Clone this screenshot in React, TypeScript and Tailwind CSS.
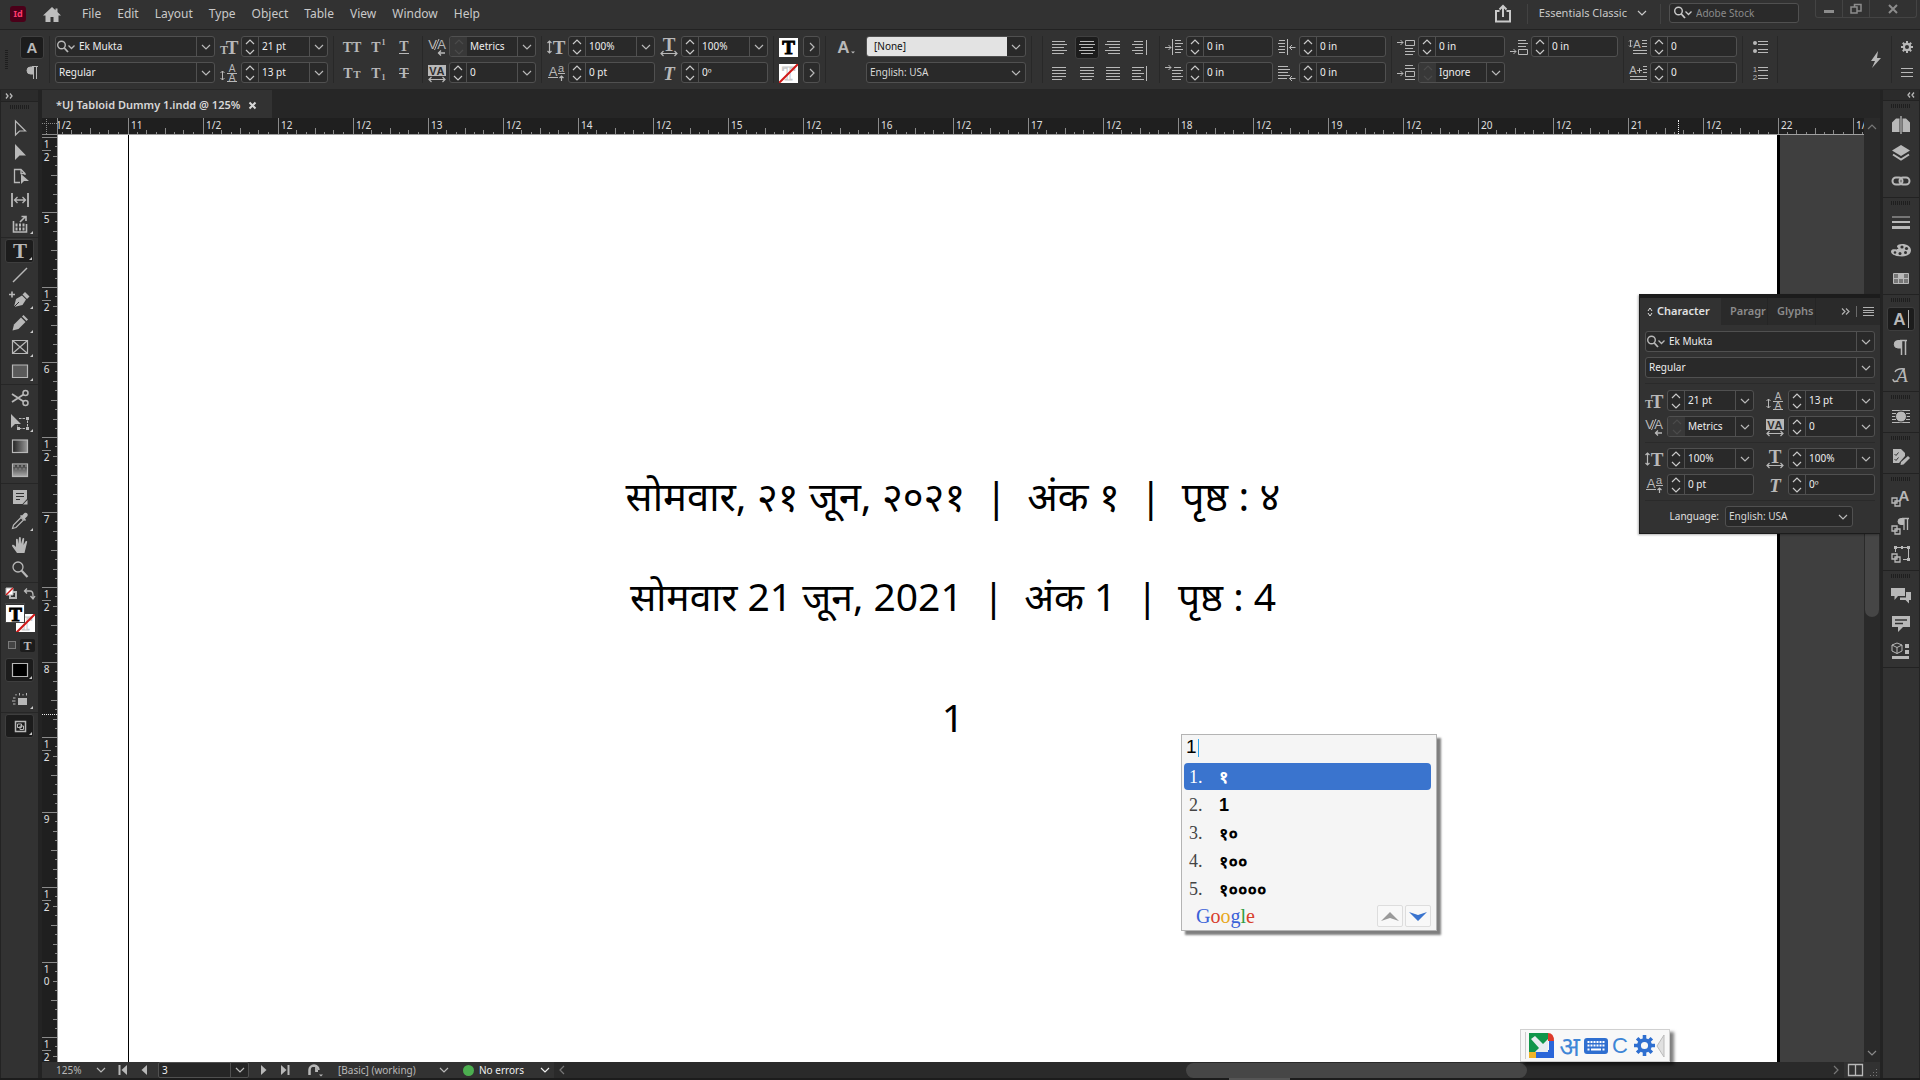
import React from "react";

type Kids = { children?: React.ReactNode };
const SERIF = "Liberation Serif";
const SANS = "Liberation Sans";

/* ---------- small shared pieces ---------- */

function Ico({ w = 18, h = 18, children }: Kids & { w?: number; h?: number }) {
  return (
    <svg width={w} height={h} viewBox={`0 0 ${w} ${h}`} fill="none" stroke="currentColor" strokeWidth="1" className="shrink-0 overflow-visible" aria-hidden="true">
      {children}
    </svg>
  );
}

function Txt({ x, y, s, children, bold, serif, italic, fill = "currentColor" }: Kids & { x: number; y: number; s: number; bold?: boolean; serif?: boolean; italic?: boolean; fill?: string }) {
  return (
    <text x={x} y={y} fontSize={s} fontFamily={serif ? SERIF : SANS} fontWeight={bold ? 700 : 400} fontStyle={italic ? "italic" : "normal"} fill={fill} stroke="none" textAnchor="middle">
      {children}
    </text>
  );
}

function Chevron({ dir = "down" }: { dir?: "down" | "up" | "right" | "left" }) {
  const d = { down: "M1 3l4 4 4-4", up: "M1 7l4-4 4 4", right: "M3 1l4 4-4 4", left: "M7 1L3 5l4 4" }[dir];
  return (
    <svg width="10" height="10" viewBox="0 0 10 10" fill="none" stroke="currentColor" strokeWidth="1.2" className="shrink-0" aria-hidden="true">
      <path d={d} />
    </svg>
  );
}

function SearchMark() {
  return (
    <Ico w={20} h={14}>
      <circle cx="5.5" cy="5" r="3.8" strokeWidth="1.4" />
      <path d="M8.3 8l3.7 4" strokeWidth="1.8" />
      <path d="M12.5 5.5l3 3 3-3" strokeWidth="1.3" />
    </Ico>
  );
}

function Spinner({ label, disabled }: { label: string; disabled?: boolean }) {
  return (
    <div className={disabled ? "flex w-[17px] shrink-0 flex-col bg-[#383838] text-[#4a4a4a]" : "flex w-[17px] shrink-0 flex-col border-r border-[#4f4f4f] text-[#c8c8c8]"}>
      <button aria-label={`${label} up`} className="flex h-[10px] items-center justify-center"><Chevron dir="up" /></button>
      <button aria-label={`${label} down`} className="flex h-[9px] items-center justify-center"><Chevron /></button>
    </div>
  );
}

function Field({ label, value, drop, dead }: { label: string; value: string; drop?: boolean; dead?: boolean }) {
  return (
    <div className="flex h-[21px] w-[87px] shrink-0 overflow-hidden rounded-[3px] border border-[#505050] bg-[#292929]">
      <Spinner label={label} disabled={dead} />
      <input aria-label={label} defaultValue={value} className="w-0 min-w-0 flex-1 bg-transparent pl-[3px] text-[10px] text-[#eeeeee] outline-none" />
      {drop && (
        <button aria-label={`${label} options`} className="flex w-[18px] shrink-0 items-center justify-center border-l border-[#505050] text-[#b8b8b8]"><Chevron /></button>
      )}
    </div>
  );
}

function Combo({ label, value, search }: { label: string; value: string; search?: boolean }) {
  return (
    <div className="flex h-[21px] w-full overflow-hidden rounded-[3px] border border-[#505050] bg-[#292929] text-[#b8b8b8]">
      {search && <span className="flex items-center"><SearchMark /></span>}
      <input aria-label={label} defaultValue={value} className="w-0 min-w-0 flex-1 bg-transparent pl-[3px] text-[10px] text-[#eeeeee] outline-none" />
      <button aria-label={`${label} options`} className="flex w-[18px] shrink-0 items-center justify-center border-l border-[#505050]"><Chevron /></button>
    </div>
  );
}

function Drop({ label, value, light }: { label: string; value: string; light?: boolean }) {
  return (
    <div className="relative h-[21px] w-full overflow-hidden rounded-[3px] border border-[#505050] bg-[#292929] text-[#b8b8b8]">
      <select aria-label={label} className={light ? "mr-[18px] block h-full w-[calc(100%-18px)] appearance-none bg-[#e3e3e3] pl-[7px] text-[10px] text-[#111111] outline-none" : "block h-full w-full appearance-none bg-transparent pl-[3px] text-[10px] text-[#d8d8d8] outline-none"}>
        <option>{value}</option>
      </select>
      <span className="pointer-events-none absolute top-[5px] right-[4px]"><Chevron /></span>
    </div>
  );
}

function Divider() {
  return <div className="mx-[5px] h-[47px] w-px shrink-0 bg-[#282828]" />;
}

/* ---------- typographic icons ---------- */

const ISize = () => <Ico><Txt x={4} y={15.5} s={12} bold serif>T</Txt><Txt x={12} y={15.5} s={19} bold serif>T</Txt></Ico>;
const ILead = () => (
  <Ico>
    <Txt x={12} y={8} s={10}>A</Txt><Txt x={12} y={17} s={10}>A</Txt>
    <path d="M7 9.5h10M7 17.5h10M2.5 7v9M.5 9l2-2 2 2M.5 14l2 2 2-2" />
  </Ico>
);
const IKern = () => <Ico><Txt x={4.5} y={11} s={13}>V</Txt><Txt x={13.5} y={11} s={13}>A</Txt><path d="M6.5 12L11 1" /><path d="M10 15h7M13 12.5L10.5 15l2.5 2.5" strokeWidth="1.3" /></Ico>;
const ITrack = () => (
  <Ico>
    <rect x="0" y="1" width="18" height="11" fill="currentColor" stroke="none" />
    <Txt x={5} y={10.5} s={11} fill="#2d2d2d" bold>V</Txt><Txt x={12.5} y={10.5} s={11} fill="#2d2d2d" bold>A</Txt>
    <path d="M1 15.5h16M3.5 13L1 15.5 3.5 18M14.5 13l2.500 2.500-2.500 2.500" strokeWidth="1.2" />
  </Ico>
);
const IVScale = () => <Ico><Txt x={12} y={15.5} s={19} bold serif>T</Txt><path d="M2.5 3v12M.5 5l2-2 2 2M.5 13l2 2 2-2" strokeWidth="1.2" /></Ico>;
const IHScale = () => <Ico><Txt x={9} y={12.5} s={19} bold serif>T</Txt><path d="M1 15.5h16M3.5 13L1 15.5 3.5 18M14.5 13l2.5 2.5-2.5 2.5" strokeWidth="1.2" /></Ico>;
const IBase = () => <Ico><Txt x={6} y={12} s={13}>A</Txt><Txt x={14} y={8} s={11}>a</Txt><path d="M1 13.5h10M11 9.5h7M14.500 17v-5M12.500 14l2-2 2 2" strokeWidth="1.2" /></Ico>;
const ISkew = () => <Ico><Txt x={9} y={15.5} s={19} bold serif italic>T</Txt></Ico>;

type Row = [number, number, number];
function Lines({ rows }: { rows: Row[] }) {
  return <>{rows.map(([y, a, b]) => <path key={y} d={`M${a} ${y}.5H${b}`} strokeWidth="1" />)}</>;
}

const alignTop: [string, Row[], boolean][] = [
  ["Align left", [[2, 1, 14], [5, 1, 16], [8, 1, 13], [11, 1, 16], [14, 1, 13]], false],
  ["Align center", [[2, 2, 16], [5, 1, 17], [8, 3, 15], [11, 1, 17], [14, 3, 15]], false],
  ["Align right", [[2, 3, 16], [5, 1, 16], [8, 5, 16], [11, 1, 16], [14, 4, 16]], false],
  ["Align away from spine", [[2, 3, 12], [5, 1, 12], [8, 4, 12], [11, 1, 12], [14, 4, 12]], true],
];
const alignBottom: [string, Row[], boolean][] = [
  ["Justify last left", [[2, 1, 15], [5, 1, 15], [8, 1, 15], [11, 1, 15], [14, 1, 11]], false],
  ["Justify last centered", [[2, 2, 16], [5, 2, 16], [8, 2, 16], [11, 2, 16], [14, 4, 14]], false],
  ["Justify all", [[2, 2, 16], [5, 2, 16], [8, 2, 16], [11, 2, 16], [14, 2, 16]], false],
  ["Align towards spine", [[2, 1, 13], [5, 1, 10], [8, 1, 13], [11, 1, 10], [14, 1, 13]], true],
];

function AlignRow({ items, active }: { items: typeof alignTop; active?: number }) {
  return (
    <>
      {items.map(([name, rows, bar], i) => (
        <button key={name} aria-label={name} className={i === active ? "flex h-[23px] w-6 items-center justify-center rounded-[3px] border border-[#404040] bg-[#1c1c1c]" : "flex h-[23px] w-6 items-center justify-center"}>
          <Ico h={17}><Lines rows={rows} />{bar && <path d="M15.5 1v15" />}</Ico>
        </button>
      ))}
    </>
  );
}

const ArrR = ({ x, y }: { x: number; y: number }) => <path d={`M${x} ${y}h6M${x + 3.5} ${y - 2.5}l2.5 2.5-2.5 2.5`} />;
const ArrL = ({ x, y }: { x: number; y: number }) => <path d={`M${x} ${y}h6M${x + 2.5} ${y - 2.5}l-2.5 2.5 2.5 2.5`} />;
const ILeftIn = () => <Ico><ArrR x={0} y={9.5} /><path d="M7.5 1v16" /><Lines rows={[[2, 10, 16], [5, 10, 18], [8, 10, 16], [11, 10, 18], [14, 10, 16]]} /></Ico>;
const IRightIn = () => <Ico><ArrL x={11.5} y={9.5} /><path d="M9.5 1v16" /><Lines rows={[[2, 1, 7], [5, 0, 7], [8, 1, 7], [11, 0, 7], [14, 1, 7]]} /></Ico>;
const IFirst = () => <Ico><ArrR x={0} y={3.5} /><Lines rows={[[3, 9, 16], [6, 7, 18], [9, 7, 16], [12, 7, 18], [15, 7, 16]]} /></Ico>;
const ILast = () => <Ico><ArrL x={11.5} y={14.5} /><Lines rows={[[2, 0, 10], [5, 0, 12], [8, 0, 10], [11, 0, 12], [14, 0, 9]]} /></Ico>;
const ISpBefore = () => <Ico><ArrR x={0} y={4.5} /><path d="M8.5 2.5h9v5h-9z" /><Lines rows={[[10, 8, 16], [13, 8, 18], [16, 8, 16]]} /></Ico>;
const ISpAfter = () => <Ico><ArrR x={0} y={13.5} /><path d="M8.5 11.5h9v5h-9z" /><Lines rows={[[2, 8, 16], [5, 8, 18], [8, 8, 16]]} /></Ico>;
const ISpSame = () => <Ico><ArrR x={0} y={9.5} /><path d="M8.5 7.5h9v5h-9z" /><Lines rows={[[1, 8, 16], [4, 8, 18], [15, 8, 18]]} /></Ico>;
const IDropLines = () => <Ico><path d="M1.5 2v7M0 3.5L1.5 2 3 3.5M0 7.5L1.5 9 3 7.5" /><Txt x={8} y={10} s={11}>A</Txt><Lines rows={[[2, 13, 18], [5, 13, 18], [8, 13, 18], [12, 4, 18], [15, 4, 18]]} /></Ico>;
const IDropChars = () => <Ico><Txt x={4} y={10} s={11}>A</Txt><path d="M8 6.5h5M10.5 4v5" /><Lines rows={[[2, 14, 18], [5, 14, 18], [8, 14, 18], [12, 1, 18], [15, 1, 18]]} /></Ico>;

function Gear({ size }: { size: number }) {
  return (
    <svg width={size} height={size} viewBox="0 0 20 20" fill="none" stroke="currentColor" aria-hidden="true">
      <circle cx="10" cy="10" r="5.2" strokeWidth="3.6" />
      <path d="M10 0v4M10 16v4M0 10h4M16 10h4M3 3l2.7 2.7M14.3 14.3L17 17M17 3l-2.7 2.7M5.7 14.3L3 17" strokeWidth="3.4" />
    </svg>
  );
}
function IPara() {
  return <Ico w={14} h={16}><path d="M7 1.5h6M8.5 2v12M11.5 2v12" /><path d="M8 2H5.5a3.5 3.5 0 000 7H8z" fill="currentColor" /></Ico>;
}

/* ---------- top bars ---------- */

const menus = ["File", "Edit", "Layout", "Type", "Object", "Table", "View", "Window", "Help"];

function MenuBar() {
  return (
    <header className="flex h-[30px] shrink-0 items-start border-b border-[#222222] pl-[10px] text-[#c9c9c9]">
      <span className="mt-[6px] flex h-4 w-4 items-center justify-center rounded-[3px] bg-[#4b0019] text-[9px] font-bold text-[#ff3a6e]">Id</span>
      <button aria-label="Home" className="mt-[6px] ml-[17px] text-[#bdbdbd]">
        <Ico w={18} h={17}><path d="M9 1L0 9.5h2.5V16h5v-5h3v5h5V9.5H18L14.500 6V2.500h-2v1.800z" fill="currentColor" stroke="none" /></Ico>
      </button>
      <nav className="mt-[5px] ml-[21px] flex gap-4">
        {menus.map((m) => <button key={m} className="text-[12px] leading-[18px]">{m}</button>)}
      </nav>
      <div className="flex-1" />
      <button aria-label="Share" className="mt-[4px]">
        <Ico w={16} h={19}><path d="M4.5 7H1v10.500h14V7h-3.500" strokeWidth="2" /><path d="M8 13V3M4.500 5.500L8 2l3.500 3.500" strokeWidth="2" /></Ico>
      </button>
      <div className="mt-[4px] ml-[16px] h-5 w-px bg-[#424242]" />
      <button className="mt-[4px] ml-[11px] flex items-center gap-[10px] text-[11px] leading-[18px]">Essentials Classic <Chevron /></button>
      <div className="mt-[4px] ml-[13px] h-5 w-px bg-[#424242]" />
      <label className="mt-[3px] ml-[8px] flex h-5 w-[130px] items-center rounded-[3px] border border-[#505050] bg-[#2a2a2a] pl-[3px]">
        <SearchMark />
        <input aria-label="Search Adobe Stock" placeholder="Adobe Stock" className="w-full min-w-0 bg-transparent pl-[3px] text-[10px] outline-none placeholder:text-[#8a8a8a]" />
      </label>
      <div className="mr-[3px] ml-[16px] flex h-[18px] w-[102px] rounded-b-[3px] border border-t-0 border-[#444444] text-[#8c8c8c]">
        <button aria-label="Minimize" className="flex flex-1 items-center justify-center border-r border-[#444444]"><Ico w={10} h={10}><path d="M0 7.5h10" strokeWidth="3" /></Ico></button>
        <button aria-label="Restore" className="flex flex-1 items-center justify-center border-r border-[#444444]"><Ico w={12} h={12}><path d="M1 4h6v6H1zM4.5 4V1.500H11V8H7" strokeWidth="1.5" /></Ico></button>
        <button aria-label="Close" className="flex w-[46px] items-center justify-center"><Ico w={10} h={10}><path d="M1 1l8 8M9 1L1 9" strokeWidth="2" /></Ico></button>
      </div>
    </header>
  );
}

function Pair({ a, b }: { a: React.ReactNode; b?: React.ReactNode }) {
  return (
    <div className="mr-[3px] flex w-[18px] shrink-0 flex-col gap-[5px]">
      <span className="flex h-[21px] items-center">{a}</span>
      {b && <span className="flex h-[21px] items-center">{b}</span>}
    </div>
  );
}
const Stack = ({ children }: Kids) => <div className="flex shrink-0 flex-col gap-[5px]">{children}</div>;

function TypeButton({ label, children }: Kids & { label: string }) {
  return <button aria-label={label} className="flex h-[21px] items-center justify-center"><Ico>{children}</Ico></button>;
}

function TSwatch({ none }: { none?: boolean }) {
  return (
    <button aria-label={none ? "Stroke" : "Fill"} className="h-[21px]">
      <svg width="19" height="19" viewBox="0 0 19 19" className="block bg-white">
        <text x="9.5" y="16" fontSize="19" fontWeight="700" fontFamily={SERIF} textAnchor="middle" fill={none ? "#ffffff" : "#000000"} stroke={none ? "#c9c9c9" : "#000000"} strokeWidth="1">T</text>
        {none && <path d="M0 19L19 0" stroke="#d01818" strokeWidth="2" />}
      </svg>
    </button>
  );
}

function ControlBar() {
  return (
    <section className="flex h-[60px] shrink-0 items-start overflow-hidden border-b border-[#262626] pt-[6px] text-[#b8b8b8]">
      <div className="flex h-[47px] w-5 shrink-0 flex-col items-center justify-center pr-[8px]">
        <div className="h-5 w-[3px] bg-[repeating-linear-gradient(#1e1e1e_0_1px,transparent_1px_2px)]" />
      </div>
      <div className="flex w-6 shrink-0 flex-col gap-[3px]">
        <button aria-label="Character formatting" className="flex h-[23px] items-center justify-center rounded-[3px] border border-[#404040] bg-[#1c1c1c]"><Ico w={16} h={16}><Txt x={8} y={13} s={15} bold>A</Txt></Ico></button>
        <button aria-label="Paragraph formatting" className="flex h-[21px] items-center justify-center"><IPara /></button>
      </div>
      <Divider />
      <div className="mr-[5px] flex w-40 shrink-0 flex-col gap-[5px]">
        <Combo label="Font family" value="Ek Mukta" search />
        <Combo label="Font style" value="Regular" />
      </div>
      <Pair a={<ISize />} b={<ILead />} />
      <Stack><Field label="Font size" value="21 pt" drop /><Field label="Leading" value="13 pt" drop /></Stack>
      <Divider />
      <div className="grid w-[78px] shrink-0 grid-cols-3 gap-y-[5px]">
        <TypeButton label="All caps"><Txt x={9} y={13.5} s={14} serif bold>TT</Txt></TypeButton>
        <TypeButton label="Superscript"><Txt x={7} y={13.5} s={14} serif bold>T</Txt><Txt x={14.5} y={7} s={8} serif bold>1</Txt></TypeButton>
        <TypeButton label="Underline"><Txt x={9} y={12.5} s={14} serif bold>T</Txt><path d="M4 15.5h10" /></TypeButton>
        <TypeButton label="Small caps"><Txt x={5} y={13.5} s={14} serif bold>T</Txt><Txt x={14} y={13.5} s={11} serif bold>T</Txt></TypeButton>
        <TypeButton label="Subscript"><Txt x={7} y={13.5} s={14} serif bold>T</Txt><Txt x={14.5} y={15.5} s={8} serif bold>1</Txt></TypeButton>
        <TypeButton label="Strikethrough"><Txt x={9} y={13.5} s={14} serif bold>T</Txt><path d="M4 9.5h10" /></TypeButton>
      </div>
      <Divider />
      <Pair a={<IKern />} b={<ITrack />} />
      <Stack><Field label="Kerning" value="Metrics" drop dead /><Field label="Tracking" value="0" drop /></Stack>
      <Divider />
      <Pair a={<IVScale />} b={<IBase />} />
      <Stack><Field label="Vertical scale" value="100%" drop /><Field label="Baseline shift" value="0 pt" /></Stack>
      <div className="w-[5px] shrink-0" />
      <Pair a={<IHScale />} b={<ISkew />} />
      <Stack><Field label="Horizontal scale" value="100%" drop /><Field label="Skew" value="0º" /></Stack>
      <Divider />
      <div className="mr-[5px] flex w-[19px] shrink-0 flex-col gap-[5px] pt-px"><TSwatch /><TSwatch none /></div>
      <Stack>
        <button aria-label="Fill options" className="flex h-[21px] w-[17px] items-center justify-center rounded-[3px] border border-[#505050] bg-[#2b2b2b]"><Chevron dir="right" /></button>
        <button aria-label="Stroke options" className="flex h-[21px] w-[17px] items-center justify-center rounded-[3px] border border-[#505050] bg-[#2b2b2b]"><Chevron dir="right" /></button>
      </Stack>
      <Divider />
      <div className="mr-[11px] flex h-[21px] w-6 shrink-0 items-center justify-end"><Ico><Txt x={6.5} y={15} s={17} bold>A</Txt><path d="M14 13.5h4l-2 2z" fill="currentColor" stroke="none" /></Ico></div>
      <div className="flex w-40 shrink-0 flex-col gap-[5px]"><Drop label="Character style" value="[None]" light /><Drop label="Language" value="English: USA" /></div>
      <Divider />
      <Divider />
      <div className="grid w-[106px] shrink-0 grid-cols-4 gap-y-[3px]">
        <AlignRow items={alignTop} active={1} />
        <AlignRow items={alignBottom} />
      </div>
      <Divider />
      <Pair a={<ILeftIn />} b={<IFirst />} />
      <Stack><Field label="Left indent" value="0 in" /><Field label="First line indent" value="0 in" /></Stack>
      <div className="w-[5px] shrink-0" />
      <Pair a={<IRightIn />} b={<ILast />} />
      <Stack><Field label="Right indent" value="0 in" /><Field label="Last line indent" value="0 in" /></Stack>
      <Divider />
      <Pair a={<ISpBefore />} b={<ISpSame />} />
      <Stack><Field label="Space before" value="0 in" /><Field label="Space between" value="Ignore" drop dead /></Stack>
      <div className="w-[5px] shrink-0" />
      <Pair a={<ISpAfter />} />
      <Stack><Field label="Space after" value="0 in" /></Stack>
      <Divider />
      <Pair a={<IDropLines />} b={<IDropChars />} />
      <Stack><Field label="Drop cap lines" value="0" /><Field label="Drop cap characters" value="0" /></Stack>
      <Divider />
      <div className="flex w-6 shrink-0 flex-col gap-[5px] pl-[4px]">
        <button aria-label="Bulleted list" className="flex h-[21px] items-center"><Ico><circle cx="3" cy="5" r="2" fill="currentColor" stroke="none" /><circle cx="3" cy="13" r="2" fill="currentColor" stroke="none" /><Lines rows={[[3, 6, 16], [6, 6, 16], [11, 6, 16], [14, 6, 16]]} /></Ico></button>
        <button aria-label="Numbered list" className="flex h-[21px] items-center"><Ico><Txt x={3} y={8} s={8}>1</Txt><Txt x={3} y={16} s={8}>2</Txt><Lines rows={[[3, 6, 16], [6, 6, 16], [11, 6, 16], [14, 6, 16]]} /></Ico></button>
      </div>
      <Divider />
      <div className="flex-1" />
      <button aria-label="Quick apply" className="mr-[4px] flex h-[47px] shrink-0 items-center"><Ico w={12} h={18}><path d="M8 0L1 10h4l-3 7 9-10H7z" fill="currentColor" stroke="none" /></Ico></button>
      <Divider />
      <div className="mr-[4px] flex w-[19px] shrink-0 flex-col items-center gap-[5px]">
        <button aria-label="Customize" className="flex h-[21px] items-center"><Gear size={12} /></button>
        <button aria-label="Panel menu" className="flex h-[21px] items-center"><Ico w={12} h={9}><Lines rows={[[0, 0, 12], [4, 0, 12], [8, 0, 12]]} /></Ico></button>
      </div>
    </section>
  );
}

/* ---------- tool column ---------- */

const F = { fill: "currentColor", stroke: "none" } as const;
type Tool = { n: string; i: React.ReactNode; fly?: boolean; on?: boolean };
const toolGroups: Tool[][] = [
  [
    { n: "Selection", i: <path d="M4.5 2v14l4-4h6z" strokeWidth="1.2" /> },
    { n: "Direct selection", i: <path d="M4 1v16l4.5-4.5H15z" {...F} /> },
    { n: "Page", i: <><path d="M9 15.5H3.5v-13H10l4 4V8M10 2.5v4h4" strokeWidth="1.3" /><path d="M10 7v10l3-3h5z" {...F} /></> },
    { n: "Gap", i: <><path d="M1 2v14M17 2v14" strokeWidth="1.8" /><path d="M4 9h10M6.5 6L3.5 9l3 3M11.5 6l3 3-3 3" strokeWidth="1.3" /></> },
    { n: "Content collector", fly: true, i: <><path d="M2.5 6v11h13V9" strokeWidth="1.6" /><path d="M4.500 10h9M4.500 14h9" strokeDasharray="2 1.500" strokeWidth="3" /><path d="M9 7l5-5M10.500 1.500H15V6" strokeWidth="1.6" /></> },
  ],
  [
    { n: "Type", fly: true, on: true, i: <Txt x={9} y={16} s={21} bold serif>T</Txt> },
    { n: "Line", i: <path d="M2 16L16 2" strokeWidth="1.4" /> },
    { n: "Pen", fly: true, i: <><path d="M3 17l2-8 6-3.5 4 4L11.500 15z" {...F} /><path d="M11.500 4.500l4.500 4.500 2.500-2.500L14 2z" {...F} /><path d="M-2 4.500h6M1 1.500v6" strokeWidth="1.6" /><path d="M3 17l5-5" stroke="#323232" /></> },
    { n: "Pencil", fly: true, i: <><path d="M1.5 16.500l1.500-6 7-7 4.500 4.500-7 7z" {...F} /><path d="M11 2.500L12.500 1l4.500 4.500L15.500 7z" {...F} /></> },
    { n: "Rectangle frame", fly: true, i: <path d="M1.5 2.5h15v13h-15zM1.5 2.5l15 13M16.5 2.5l-15 13" strokeWidth="1.2" /> },
    { n: "Rectangle", fly: true, i: <path d="M1.5 3h15v12.5h-15z" fill="#5a5a5a" strokeWidth="1.2" /> },
  ],
  [
    { n: "Scissors", i: <><circle cx="14.500" cy="4" r="2.500" strokeWidth="1.5" /><circle cx="14.500" cy="14" r="2.500" strokeWidth="1.5" /><path d="M1 5l11.500 7.500M1 13l11.500-7.500" strokeWidth="1.8" /></> },
    { n: "Free transform", fly: true, i: <><path d="M0 1v14l4-4h6z" {...F} /><path d="M8 5.500h8.500v10h-10V12" strokeDasharray="2.5 1" /><path d="M15 4h3v3h-3zM15 14h3v3h-3zM6 14h3v3H6z" {...F} /></> },
    { n: "Gradient swatch", i: <rect x="1.5" y="3" width="15" height="12.5" fill="url(#gradH)" strokeWidth="1.2" /> },
    { n: "Gradient feather", i: <><rect x="1.5" y="3" width="15" height="12.5" fill="url(#gradV)" strokeWidth="1.2" /><path d="M2 5h14M4 8h12" stroke="#777" strokeDasharray="2 2" strokeWidth="2" /></> },
  ],
  [
    { n: "Note", i: <><path d="M2 2h14v9l-4.5 5H2z" {...F} /><path d="M5 5.500h8M5 8.500h8M5 11.500h4" stroke="#323232" /><path d="M16.500 12v4.500H12" {...F} /></> },
    { n: "Eyedropper", fly: true, i: <><path d="M10 5.500L2.500 13 1.500 16.500 5 15.500 12.500 8z" strokeWidth="1.2" /><path d="M9 4l5 5 1-1-1-1.500 2.500-2.500c1-2-1-4-3-3L11 3.500 10 3z" {...F} /></> },
    { n: "Hand", i: <path d="M6 17l-5-7c0-1.500 1.500-1.500 2.500-.5L5 11V3.500c0-1 1.700-1 1.800 0L7.200 8 8 1.800c0-1.200 1.800-1.200 1.800 0L10 8l1.500-5.500c.3-1 1.900-.7 1.700.4L12.500 9l2-3.500c.6-1 2-.3 1.600.8L13.500 17z" {...F} /> },
    { n: "Zoom", i: <><circle cx="7" cy="7" r="5" strokeWidth="1.3" /><path d="M10.700 10.700L16.500 17" strokeWidth="2.2" /></> },
  ],
];

function ToolButton({ t }: { t: Tool }) {
  return (
    <button aria-label={t.n} className={t.on ? "relative flex h-6 w-[29px] items-center justify-center rounded-[3px] border border-[#3e3e3e] bg-[#1c1c1c]" : "relative flex h-6 w-[29px] items-center justify-center"}>
      <Ico>{t.i}</Ico>
      {t.fly && <span className="absolute right-px bottom-[2px] h-[3px] w-[3px] bg-[#c8c8c8] [clip-path:polygon(100%_0,100%_100%,0_100%)]" />}
    </button>
  );
}

const Rule = () => <div className="my-px h-px w-full bg-[#262626]" />;

function ToolColumn() {
  return (
    <aside className="flex w-[42px] shrink-0 flex-col items-center border-r-4 border-l border-[#232323] bg-[#323232] text-[#b8b8b8]">
      <svg width="0" height="0" className="absolute" aria-hidden="true">
        <defs>
          <linearGradient id="gradH"><stop stopColor="#222" /><stop offset="1" stopColor="#999" /></linearGradient>
          <linearGradient id="gradV" x2="0" y2="1"><stop stopColor="#333" /><stop offset="1" stopColor="#aaa" /></linearGradient>
        </defs>
      </svg>
      <div className="flex h-3 w-full items-center border-b border-[#222222] bg-[#2b2b2b] pl-[4px]"><Ico w={8} h={6}><path d="M1 .5L3 3 1 5.5M5 .5L7 3 5 5.5" strokeWidth="1.3" /></Ico></div>
      <div className="mt-[3px] mb-[7px] h-1 w-5 bg-[repeating-linear-gradient(90deg,#1e1e1e_0_1px,transparent_1px_2px)]" />
      {toolGroups.map((g, i) => (
        <React.Fragment key={i}>
          {g.map((t) => <ToolButton key={t.n} t={t} />)}
          <Rule />
        </React.Fragment>
      ))}
      <div className="flex h-[19px] w-[30px] items-center justify-between">
        <button aria-label="Default fill and stroke"><Ico w={13} h={13}><path d="M5 5h6v6H5z" strokeWidth="2" /><path d="M1 1h7v7H1z" fill="#fff" /><path d="M1 8l7-7" stroke="#d01818" strokeWidth="1.5" /></Ico></button>
        <button aria-label="Swap fill and stroke"><Ico w={11} h={13}><path d="M1 4h5q3 0 3 4v3M3 1.500L.5 4 3 6.500M6.500 9L9 12l2-3" strokeWidth="1.3" /></Ico></button>
      </div>
      <div className="relative h-[34px] w-[30px]">
        <div className="absolute right-0 bottom-[5px] h-[19px] w-[19px] overflow-hidden"><TSwatch none /></div>
        <div className="absolute top-0 left-0 h-[20px] w-[20px] overflow-hidden border border-[#444444]"><TSwatch /></div>
      </div>
      <div className="flex h-4 w-[30px] items-center justify-between">
        <button aria-label="Formatting affects container" className="ml-[3px] h-[8px] w-[8px] border border-[#7a7a7a] bg-[#444444]" />
        <button aria-label="Formatting affects text" className="flex h-[13px] w-[15px] items-center justify-center rounded-[2px] bg-[#1c1c1c]"><Ico w={11} h={11}><Txt x={5.5} y={10} s={12} bold serif>T</Txt></Ico></button>
      </div>
      <div className="h-[5px]" />
      <ToolButton t={{ n: "Apply color", on: true, fly: true, i: <path d="M1.5 2.5h15v13h-15z" fill="#000" strokeWidth="1.2" /> }} />
      <div className="h-[5px]" />
      <ToolButton t={{ n: "View options", fly: true, i: <><path d="M7 8h9v7H7z" {...F} /><path d="M5 4v1.5M8.5 3v2.5M12 4v1.5M15.5 3v2.5M2 8h2.5M1 11h3.5M2 14h2.5" /></> }} />
      <Rule />
      <ToolButton t={{ n: "Screen mode", on: true, fly: true, i: <><path d="M4.5 4.5h10v10h-10z" strokeWidth="1.5" /><path d="M6.5 7h4v3.5h-4zM9 9h3.500v3.500H9z" /></> }} />
    </aside>
  );
}

/* ---------- right dock ---------- */

const squares = <path d="M1 9h5v5H1zM4 12h5v5H4z" strokeWidth="1.3" />;
type DockItem = { n: string; i: React.ReactNode; on?: boolean };
const dock: DockItem[][] = [
  [
    { n: "Pages", i: <><path d="M1 6.500L5 2.500h3.500V16H1zM19 6.500l-4-4h-3.500V16H19z" {...F} /><path d="M10 0v18" strokeWidth="1.3" /></> },
    { n: "Layers", i: <><path d="M10 1l9 5.500-9 5.500-9-5.500z" {...F} /><path d="M2 10.500l8 5 8-5" strokeWidth="2" /></> },
    { n: "Links", i: <><rect x="1.5" y="5.500" width="10" height="7" rx="3.500" strokeWidth="2" /><rect x="8.500" y="5.500" width="10" height="7" rx="3.500" strokeWidth="2" /></> },
  ],
  [
    { n: "Stroke", i: <><path d="M1 4h18" /><path d="M1 9h18" strokeWidth="2" /><path d="M1 14.500h18" strokeWidth="3" /></> },
    { n: "Color", i: <><path d="M11 3c5 0 9 2.500 9 6.500 0 3.500-4 6-9 6S0 14 0 10.500C0 8 3 8 5.500 8.500 8 8.500 7.500 7 6.500 6.500 5 5 7 3 11 3z" {...F} /><circle cx="11" cy="6" r="1.6" fill="#323232" stroke="none" /><circle cx="15.500" cy="7.500" r="1.600" fill="#323232" stroke="none" /><circle cx="4" cy="11.500" r="1.3" fill="#323232" stroke="none" /><circle cx="9" cy="12.500" r="1.5" fill="#323232" stroke="none" /><circle cx="14.500" cy="11.500" r="1.5" fill="#323232" stroke="none" /></> },
    { n: "Swatches", i: <><path d="M2.5 4.500h15v10h-15z" fill="#777" /><path d="M8 5h5v4H8z" {...F} /><path d="M2.5 9.500h15M7.500 4.500v10M12.500 4.500v10" /></> },
  ],
  [
    { n: "Character", on: true, i: <><Txt x={8.5} y={15} s={17} bold>A</Txt><path d="M17.5 0v18" /></> },
    { n: "Paragraph", i: <><path d="M9 2.500h7M10.500 3v14M14.500 3v14" strokeWidth="1.5" /><path d="M10 2.500H7a3.500 3.500 0 000 7.500h3z" fill="currentColor" /></> },
    { n: "Glyphs", i: <><Txt x={11} y={16} s={19} serif italic>A</Txt><path d="M4 6q2-4 10-3M2 13q0 3.500 4 2" strokeWidth="1.4" /></> },
  ],
  [{ n: "Text wrap", i: <><path d="M1 3.500h18M1 6.500h18M1 9.500h18M1 12.500h18M1 15.500h18" /><circle cx="10" cy="9.500" r="5.500" fill="currentColor" stroke="#323232" /></> }],
  [{ n: "Data merge", i: <><path d="M2 1h8l4 4v3l-6 7H2z" {...F} /><path d="M3.500 6l1.500 1.500 2.500-3M3.500 11L5 12.500l2.500-3" stroke="#323232" /><path d="M17 8l2 2-6.500 6.500-3 .5.500-3z" {...F} /></> }],
  [
    { n: "Character styles", i: <><Txt x={13} y={12} s={15} bold>A</Txt>{squares}</> },
    { n: "Paragraph styles", i: <><path d="M11 1.500h7M13 2v11M16.500 2v11" strokeWidth="1.3" /><path d="M12.500 1.500H10a3 3 0 000 6h2.500z" fill="currentColor" />{squares}</> },
    { n: "Object styles", i: <><path d="M4.500 7V2.500h13v12H12" /><path d="M3 1h3v3H3zM16 1h3v3h-3zM16 13h3v3h-3zM10 1h2v3h-2z" {...F} />{squares}</> },
  ],
  [
    { n: "Comments", i: <><path d="M0 2h14v8H7l-3.500 4v-4H0z" {...F} /><path d="M15 6h5v8h-2v3.500L14.500 14H9v-2.500h6z" {...F} /></> },
    { n: "Notes", i: <><path d="M1 2h18v11h-7l-5 5v-5H1z" {...F} /><path d="M4 6h12M4 9.500h8" stroke="#323232" strokeWidth="1.5" /></> },
    { n: "Libraries", i: <><path d="M6 1l5 2v6l-5 2.500L1 9V3zM1 3l5 2.500L11 3M6 5.500v6" /><path d="M14 2h4v4h-4zM14 8h4v4h-4zM1 14h17v3H1z" {...F} /></> },
  ],
];

function RightDock() {
  return (
    <aside className="flex w-[40px] shrink-0 flex-col border-r border-l-[3px] border-[#232323] bg-[#323232] text-[#b8b8b8]">
      <div className="flex h-[11px] items-center justify-end border-b border-[#222222] bg-[#2b2b2b] pr-[4px]"><Ico w={8} h={6}><path d="M3 .5L1 3l2 2.5M7 .5L5 3l2 2.5" strokeWidth="1.3" /></Ico></div>
      {dock.map((g, i) => (
        <div key={i} className="flex flex-col items-center border-b border-[#222222] pb-[2px]">
          <div className="my-[3px] h-1 w-5 bg-[repeating-linear-gradient(90deg,#1e1e1e_0_1px,transparent_1px_2px)]" />
          {g.map((t) => (
            <button key={t.n} aria-label={t.n} className={t.on ? "my-[2px] flex h-6 w-7 items-center justify-center rounded-[3px] border border-[#3e3e3e] bg-[#1c1c1c]" : "flex h-7 w-7 items-center justify-center"}>
              <Ico w={20}>{t.i}</Ico>
            </button>
          ))}
        </div>
      ))}
    </aside>
  );
}

/* ---------- rulers ---------- */

const hLabels = ["1/2", ...Array.from({ length: 12 }, (_, i) => [String(11 + i), "1/2"]).flat()];
const vLabels = ["half", "5", "half", "6", "half", "7", "half", "8", "half", "9", "half", "10", "half"];

function HRuler() {
  return (
    <div className="relative flex h-[17px] flex-1 overflow-hidden border-b border-[#a0a0a0]">
      {hLabels.map((l, i) => (
        <div key={i} className={i === 0 ? "-ml-[5px] flex h-4 w-[75px] shrink-0 border-l border-[#8a8a8a]" : "flex h-4 w-[75px] shrink-0 border-l border-[#8a8a8a]"}>
          <div className="w-0 overflow-visible pl-[2px] text-[10px] leading-[15px] whitespace-nowrap text-[#e0e0e0]">{l}</div>
          <svg width="70" height="16" viewBox="3 0 70 16" stroke="#8a8a8a" className="shrink-0" aria-hidden="true">
            <path d="M9.5 14v2M18.5 12v4M28.5 14v2M37.5 10v6M46.5 14v2M55.5 12v4M65.5 14v2" />
          </svg>
        </div>
      ))}
      <div className="absolute top-[2px] bottom-0 left-[1620px] border-l border-dotted border-[#eeeeee]" />
    </div>
  );
}

function VRuler() {
  return (
    <div className="relative flex w-4 shrink-0 flex-col overflow-hidden border-r border-[#a0a0a0] bg-[#1f1f1f] pt-[2px]">
      {vLabels.map((l, i) => (
        <div key={i} className="flex h-[75px] shrink-0 items-start border-t border-[#8a8a8a] text-[10px] leading-[12px] text-[#e0e0e0]">
          <div className="w-[9px] text-center">
            {l === "half" ? (<><div className="border-b border-[#8a8a8a]">1</div><div>2</div></>) : l.split("").map((c, k) => <div key={k}>{c}</div>)}
          </div>
          <svg width="6" height="74" viewBox="0 0 6 74" stroke="#8a8a8a" aria-hidden="true">
            <path d="M4 8.5h2M2 18.5h4M4 27.5h2M0 37.5h6M4 46.5h2M2 56.5h4M4 65.5h2" />
          </svg>
        </div>
      ))}
      <div className="absolute top-[579px] right-0 left-0 border-t border-dotted border-[#eeeeee]" />
    </div>
  );
}

/* ---------- document ---------- */

function StoryLine({ parts, large }: { parts: string[]; large?: boolean }) {
  return (
    <p className={large ? "flex h-[100px] items-center justify-center gap-5 text-[40px] leading-[60px] whitespace-pre" : "flex h-[100px] items-center justify-center gap-5 text-[39px] leading-[60px] whitespace-pre"}>
      {parts.map((p, i) => (
        <React.Fragment key={i}>{i > 0 && <span>|</span>}<span>{p}</span></React.Fragment>
      ))}
    </p>
  );
}

function Page() {
  return (
    <main className="flex min-w-0 flex-1 overflow-hidden bg-[#3f3f3f]">
      <div className="w-[70px] shrink-0 bg-white" />
      <article className="min-w-0 flex-1 border-r-[3px] border-l border-black bg-white pt-[311px] text-black">
        <StoryLine large parts={["सोमवार, २१ जून, २०२१", "अंक १", "पृष्ठ : ४"]} />
        <StoryLine parts={["सोमवार 21 जून, 2021", "अंक 1", "पृष्ठ : 4"]} />
        <div className="h-[21px]" />
        <StoryLine parts={["1"]} />
      </article>
      <div className="w-[84px] shrink-0" />
    </main>
  );
}

function VScroll() {
  return (
    <div className="flex w-4 shrink-0 flex-col items-center bg-[#2a2a2a]">
      <div className="h-[265px]" />
      <div className="h-[217px] w-[14px] rounded-full bg-[#464646]" />
      <div className="flex-1" />
      <button aria-label="Scroll down" className="mb-[4px] text-[#8a8a8a]"><Chevron /></button>
    </div>
  );
}

function StatusBar() {
  return (
    <footer className="flex h-4 shrink-0 items-center bg-[#323232] text-[10px] leading-4 text-[#b8b8b8]">
      <button className="flex w-[76px] items-center gap-[15px] pl-[14px]">125% <Chevron /></button>
      <button aria-label="First page" className="w-[22px]"><Ico w={10} h={10}><path d="M1.5 0v10" strokeWidth="2" /><path d="M9 0L3.500 5 9 10z" {...F} /></Ico></button>
      <button aria-label="Previous page" className="w-[18px]"><Ico w={8} h={10}><path d="M7 0L1.500 5 7 10z" {...F} /></Ico></button>
      <div className="flex h-4 w-[91px] rounded-[2px] border border-[#505050] bg-[#262626]">
        <input aria-label="Page" defaultValue="3" className="w-0 min-w-0 flex-1 bg-transparent pl-[3px] text-[10px] leading-[14px] text-[#eeeeee] outline-none" />
        <button aria-label="Page list" className="flex w-[18px] items-center justify-center border-l border-[#505050]"><Chevron /></button>
      </div>
      <button aria-label="Next page" className="ml-[11px] w-5"><Ico w={8} h={10}><path d="M1 0l5.500 5L1 10z" {...F} /></Ico></button>
      <button aria-label="Last page" className="w-[26px]"><Ico w={10} h={10}><path d="M8.500 0v10" strokeWidth="2" /><path d="M1 0l5.500 5L1 10z" {...F} /></Ico></button>
      <button aria-label="Preflight menu" className="w-8"><Ico w={18} h={14}><path d="M3.500 12V7a4.500 4.500 0 019 0" strokeWidth="2.5" /><path d="M7 3h3v5h2" strokeWidth="1.8" /><path d="M13 11.500h4l-2 2z" {...F} /></Ico></button>
      <button className="flex w-[111px] items-center justify-between">[Basic] (working) <Chevron /></button>
      <span className="ml-[14px] h-[11px] w-[11px] rounded-full bg-[#4caf50]" />
      <button className="ml-[5px] flex w-[71px] items-center justify-between text-[#eeeeee]">No errors <Chevron /></button>
      <div className="ml-[4px] flex h-full min-w-0 flex-1 items-center bg-[#2a2a2a] px-[3px] text-[#777777]">
        <Chevron dir="left" />
        <div className="mx-[2px] flex-1"><div className="ml-[49%] h-[15px] w-[27%] rounded-full bg-[#464646]" /></div>
        <Chevron dir="right" />
      </div>
      <button aria-label="Split layout" className="ml-[4px] text-[#b8b8b8]"><Ico w={16} h={12}><path d="M.5.5h14v11H.5zM7.5 0v12" strokeWidth="1.3" /></Ico></button>
      <Ico w={16} h={14}><path d="M6 12.5h9M9 9.5h6M12 6.5h3" strokeDasharray="1 2" stroke="#777" /></Ico>
    </footer>
  );
}

/* ---------- floating windows ---------- */

function CharacterPanel() {
  return (
    <section className="absolute top-[294px] right-[40px] w-[241px] border-t-4 border-b border-l border-[#1c1c1c] bg-[#323232] text-[10px] text-[#b8b8b8] shadow-[-1px_1px_2px_rgba(0,0,0,0.3)]">
      <div className="flex h-[27px] items-center bg-[#2a2a2a] text-[11px] font-semibold text-[#8c8c8c]">
        <button className="flex h-full w-[81px] items-center gap-[4px] bg-[#323232] pl-[7px] text-[#e0e0e0]">
          <Ico w={6} h={10}><path d="M1 4l2-3 2 3M1 6l2 3 2-3" /></Ico>
          Character
        </button>
        <button className="h-full w-[47px] border-r border-[#252525] pl-[9px] text-left">Paragr</button>
        <button className="h-full w-[48px] border-r border-[#252525] pl-[9px] text-left">Glyphs</button>
        <div className="flex flex-1 items-center justify-end gap-[6px] pr-[6px] text-[#b0b0b0]">
          <Ico w={9} h={7}><path d="M1 .5l3 3-3 3M5 .5l3 3-3 3" strokeWidth="1.2" /></Ico>
          <span className="h-[11px] w-px bg-[#6a6a6a]" />
          <Ico w={11} h={9}><Lines rows={[[0, 0, 11], [3, 0, 11], [5, 0, 11], [8, 0, 11]]} /></Ico>
        </div>
      </div>
      <div className="flex flex-col px-[5px] pt-[6px] pb-[6px]">
        <Combo label="Panel font family" value="Ek Mukta" search />
        <div className="h-[5px]" />
        <Combo label="Panel font style" value="Regular" />
        <div className="mt-[5px] mb-[6px] h-px bg-[#2a2a2a]" />
        <div className="grid grid-cols-[22px_99px_22px_87px] items-center gap-y-[5px]">
          <ISize /><Field label="Panel font size" value="21 pt" drop /><ILead /><Field label="Panel leading" value="13 pt" drop />
          <IKern /><Field label="Panel kerning" value="Metrics" drop dead /><ITrack /><Field label="Panel tracking" value="0" drop />
        </div>
        <div className="my-[5px] h-px bg-[#2a2a2a]" />
        <div className="grid grid-cols-[22px_99px_22px_87px] items-center gap-y-[5px]">
          <IVScale /><Field label="Panel vertical scale" value="100%" drop /><IHScale /><Field label="Panel horizontal scale" value="100%" drop />
          <IBase /><Field label="Panel baseline shift" value="0 pt" /><ISkew /><Field label="Panel skew" value="0º" />
        </div>
        <div className="my-[5px] h-px bg-[#2a2a2a]" />
        <div className="flex items-center justify-end gap-[6px] pr-[22px] text-[#e0e0e0]">
          <span>Language:</span>
          <div className="w-32"><Drop label="Panel language" value="English: USA" /></div>
        </div>
      </div>
    </section>
  );
}

const candidates = ["१", "1", "१०", "१००", "१००००"];

function InputWindow() {
  return (
    <section className="absolute top-[734px] left-[1181px] w-[256px] border border-[#b4b4b4] bg-[#f5f5f5] px-[2px] pb-px text-black shadow-[4px_4px_2px_rgba(0,0,0,0.5)]">
      <div className="flex h-7 items-center pb-[3px] pl-[2px] font-['Liberation_Sans'] text-[19px]">1<span className="ml-px h-[18px] w-px bg-[#30a8f0]" /></div>
      <ol>
        {candidates.map((c, i) => (
          <li key={c} className={i === 0 ? "mb-px flex h-[27px] w-[247px] items-center rounded-[4px] bg-[#3a74ce] pt-px pl-[5px] text-white" : "mb-px flex h-[27px] items-center pt-[2px] pl-[5px]"}>
            <span className={i === 0 ? "w-[30px] font-['Liberation_Serif'] text-[18px]" : "w-[30px] font-['Liberation_Serif'] text-[18px] text-[#444444]"}>{i + 1}.</span>
            <span className={c === "1" ? "font-['Liberation_Sans'] text-[18px] font-bold" : "text-[17px] leading-[26px] font-bold"}>{c}</span>
          </li>
        ))}
      </ol>
      <div className="flex h-[26px] items-center pl-[12px]">
        <span className="font-['Liberation_Serif'] text-[20px] leading-[26px]">
          <span className="text-[#3a62d8]">G</span><span className="text-[#d8402c]">o</span><span className="text-[#e8a820]">o</span><span className="text-[#3a62d8]">g</span><span className="text-[#2f9e44]">l</span><span className="text-[#d8402c]">e</span>
        </span>
        <div className="flex-1" />
        <button aria-label="Previous candidates" className="flex h-[22px] w-[26px] items-center justify-center rounded-[2px] border border-[#dddddd] bg-[#f8f8f8] text-[#9a9a9a]"><Ico w={18} h={9}><path d="M0 9l9-9 9 9-9-3z" {...F} /></Ico></button>
        <button aria-label="Next candidates" className="mr-[3px] ml-[2px] flex h-[22px] w-[26px] items-center justify-center rounded-[2px] border border-[#dddddd] bg-[#f8f8f8] text-[#3a74ce]"><Ico w={18} h={9}><path d="M0 0l9 9 9-9-9 3z" {...F} /></Ico></button>
      </div>
    </section>
  );
}

function InputToolbar() {
  return (
    <section className="absolute top-[1029px] left-[1520px] flex h-[33px] w-[150px] items-center border border-[#d0d0d0] bg-[#f8f8f8] pl-[4px] text-[#3f86d6] shadow-[4px_3px_3px_rgba(0,0,0,0.5)]">
      <span className="mr-[3px] h-[27px] w-px bg-[#cccccc]" />
      <button aria-label="Input tools"><svg width="25" height="25" viewBox="0 0 25 25" className="block" aria-hidden="true"><path d="M0 0h19v19H0z" fill="#11964a" /><path d="M7 17h18v8H7zM20 8h5v17h-5z" fill="#2a66d9" /><path d="M0 19h7v6H0z" fill="#f0b429" /><path d="M19 0q6 0 6 8h-6z" fill="#dd3a2a" /><path d="M2 6l4-3 8 8 5-5v13H6l4-4z" fill="#e9edf0" /></svg></button>
      <button aria-label="Hindi" className="ml-[4px] w-[23px] text-[27px] leading-[30px]">अ</button>
      <button aria-label="Keyboard" className="ml-[3px] text-[#2f6fd0]"><Ico w={24} h={16}><rect x="1" y="1" width="22" height="14" rx="2" strokeWidth="2" fill="#2f6fd0" /><path d="M3.5 4h17M3.5 7.500h17" stroke="#fff" strokeWidth="2" strokeDasharray="2 1" /><path d="M3.5 11.500h2M7 11.500h10M18.500 11.500h2" stroke="#fff" strokeWidth="2" /></Ico></button>
      <button aria-label="Character width" className="ml-[3px] w-[18px] font-['Liberation_Sans'] text-[22px] leading-[26px]">C</button>
      <button aria-label="Settings" className="ml-[5px] text-[#2f6fd0]"><Gear size={21} /></button>
      <Ico w={9} h={24}><path d="M9 1L2 12l7 11z" fill="#e0e0e0" stroke="#bbbbbb" /></Ico>
    </section>
  );
}

export default function App() {
  return (
    <div className="relative flex h-screen flex-col overflow-hidden bg-[#323232] font-['Noto_Sans','Open_Sans',sans-serif]">
      <MenuBar />
      <ControlBar />
      <div className="flex min-h-0 flex-1">
        <ToolColumn />
        <div className="flex min-w-0 flex-1 flex-col">
          <div className="flex h-7 shrink-0 bg-[#262626]">
            <div className="flex w-[230px] items-center gap-[9px] bg-[#323232] pt-[2px] pl-[14px] text-[11px] font-semibold text-[#d8d8d8]">
              <span className="whitespace-nowrap">*UJ Tabloid Dummy 1.indd @ 125%</span>
              <button aria-label="Close document"><Ico w={7} h={7}><path d="M.5.5l6 6M6.5.5l-6 6" strokeWidth="2" /></Ico></button>
            </div>
          </div>
          <div className="flex h-[17px] shrink-0 bg-[#1f1f1f]">
            <div className="w-4 shrink-0 border-r border-b border-[#8a8a8a]"><Ico w={15} h={16}><path d="M4.5 1v15M0 5.5h15" strokeDasharray="1 1" stroke="#8a8a8a" /></Ico></div>
            <HRuler />
            <div className="flex w-4 shrink-0 items-center justify-center bg-[#2a2a2a] text-[#777777]"><Chevron dir="up" /></div>
          </div>
          <div className="flex min-h-0 flex-1">
            <VRuler />
            <Page />
            <VScroll />
          </div>
          <StatusBar />
        </div>
        <RightDock />
      </div>
      <div className="h-[2px] shrink-0 bg-[#1c1c1c]"><div className="ml-[64%] h-full w-[61px] bg-[#555555]" /></div>
      <CharacterPanel />
      <InputWindow />
      <InputToolbar />
    </div>
  );
}
